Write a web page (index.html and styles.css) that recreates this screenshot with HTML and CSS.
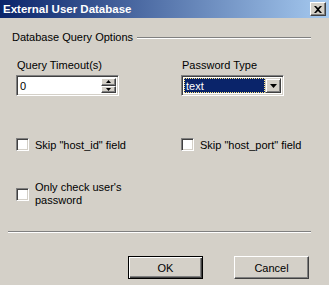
FILE: index.html
```html
<!DOCTYPE html>
<html>
<head>
<meta charset="utf-8">
<link rel="stylesheet" href="styles.css">
</head>
<body>
<div class="dialog">
  <div class="titlebar">
    <span class="title">External User Database</span>
    <span class="close"><svg width="8" height="7" viewBox="0 0 8 7"><path d="M0 0h2l2 2 2-2h2L5 3.5 8 7H6L4 5 2 7H0l3-3.5z" fill="#000"/></svg></span>
  </div>
  <div class="body">
    <div class="group-head">
      <span>Database Query Options</span>
      <span class="etch"></span>
    </div>
    <div class="fields">
      <div class="field">
        <div class="label">Query Timeout(s)</div>
        <div class="sunken input">
          <span class="val">0</span>
          <span class="spin">
            <span class="spinbtn"><svg width="5" height="3" viewBox="0 0 5 3"><path d="M2.5 0L5 3H0z" fill="#000"/></svg></span>
            <span class="spinbtn"><svg width="5" height="3" viewBox="0 0 5 3"><path d="M0 0h5L2.5 3z" fill="#000"/></svg></span>
          </span>
        </div>
      </div>
      <div class="field">
        <div class="label">Password Type</div>
        <div class="sunken select">
          <span class="sel"><span class="seltext">text</span></span>
          <span class="dropbtn"><svg width="7" height="4" viewBox="0 0 7 4"><path d="M0 0h7L3.5 4z" fill="#000"/></svg></span>
        </div>
      </div>
    </div>
    <div class="checks">
      <label class="check"><span class="box"></span><span>Skip "host_id" field</span></label>
      <label class="check"><span class="box"></span><span>Skip "host_port" field</span></label>
    </div>
    <label class="check only"><span class="box"></span><span>Only check user's<br>password</span></label>
    <div class="sep"></div>
    <div class="buttons">
      <button class="btn default">OK</button>
      <button class="btn">Cancel</button>
    </div>
  </div>
</div>
</body>
</html>
```

FILE: styles.css
```css
html, body {
  margin: 0;
  padding: 0;
}
body {
  width: 329px;
  height: 285px;
  background: #d4d0c8;
  font-family: "Liberation Sans", Arial, sans-serif;
  font-size: 11px;
  color: #000;
  overflow: hidden;
}
.dialog {
  display: flex;
  flex-direction: column;
  height: 285px;
}
.titlebar {
  height: 18px;
  display: flex;
  align-items: center;
  justify-content: space-between;
  padding: 0 3px 0 3px;
  background: linear-gradient(to right, #0a246a, #a6caf0);
}
.title {
  color: #fff;
  font-weight: bold;
  font-family: "Liberation Sans", Arial, sans-serif;
  font-size: 11.5px;
}
.close {
  width: 16px;
  height: 14px;
  box-sizing: border-box;
  background: #d4d0c8;
  border-top: 1px solid #fff;
  border-left: 1px solid #fff;
  border-right: 1px solid #404040;
  border-bottom: 1px solid #404040;
  box-shadow: inset -1px -1px 0 #808080;
  display: flex;
  align-items: center;
  justify-content: center;
  padding-right: 1px;
}
.body {
  padding: 12px 0 0 0;
  display: flex;
  flex-direction: column;
}
.group-head {
  display: flex;
  align-items: center;
  margin-left: 12px;
  margin-right: 18px;
  height: 14px;
}
.etch {
  flex: 1;
  margin-left: 4px;
  margin-top: 1px;
  border-top: 1px solid #808080;
  border-bottom: 1px solid #fff;
}
.fields {
  display: grid;
  grid-template-columns: 165px 1fr;
  margin-top: 15px;
  margin-left: 16px;
}
.label {
  margin-left: 1px;
  height: 16px;
  line-height: 13px;
}
.sunken {
  box-sizing: border-box;
  height: 21px;
  border-top: 1px solid #808080;
  border-left: 1px solid #808080;
  border-right: 1px solid #fff;
  border-bottom: 1px solid #fff;
  box-shadow: inset 1px 1px 0 #404040, inset -1px -1px 0 #d4d0c8;
  background: #fff;
  display: flex;
  align-items: stretch;
  padding: 2px;
}
.input {
  width: 103px;
}
.val {
  flex: 1;
  padding-left: 1px;
  line-height: 16px;
}
.spin {
  width: 15px;
  display: flex;
  flex-direction: column;
}
.spinbtn {
  flex: 1;
  box-sizing: border-box;
  background: #d4d0c8;
  border-top: 1px solid #fff;
  border-left: 1px solid #fff;
  border-right: 1px solid #404040;
  border-bottom: 1px solid #404040;
  box-shadow: inset -1px -1px 0 #808080;
  display: flex;
  align-items: center;
  justify-content: center;
}
.select {
  width: 103px;
}
.sel {
  flex: 1;
  box-sizing: border-box;
  border: 1px dotted #ffe680;
  background: #0a246a;
  color: #fff;
  display: flex;
  align-items: center;
  padding-left: 1px;
}
.dropbtn {
  width: 16px;
  box-sizing: border-box;
  background: #d4d0c8;
  border-top: 1px solid #d4d0c8;
  border-left: 1px solid #d4d0c8;
  border-right: 1px solid #404040;
  border-bottom: 1px solid #404040;
  box-shadow: inset 1px 1px 0 #fff, inset -1px -1px 0 #808080;
  display: flex;
  align-items: center;
  justify-content: center;
}
.checks {
  display: grid;
  grid-template-columns: 165px 1fr;
  margin-left: 16px;
  margin-top: 42px;
}
.check {
  display: flex;
  align-items: center;
  gap: 6px;
}
.box {
  width: 13px;
  height: 13px;
  box-sizing: border-box;
  background: #fff;
  border-top: 1px solid #808080;
  border-left: 1px solid #808080;
  border-right: 1px solid #fff;
  border-bottom: 1px solid #fff;
  box-shadow: inset 1px 1px 0 #404040, inset -1px -1px 0 #d4d0c8;
  flex: none;
}
.only {
  margin-left: 16px;
  margin-top: 30px;
  line-height: 13px;
}
.sep {
  margin: 24px 18px 0 8px;
  border-top: 1px solid #808080;
  border-bottom: 1px solid #fff;
}
.buttons {
  display: flex;
  justify-content: flex-end;
  gap: 31px;
  margin-top: 23px;
  margin-right: 20px;
}
.btn {
  width: 75px;
  height: 23px;
  box-sizing: border-box;
  margin: 0;
  padding: 0;
  font-family: "Liberation Sans", Arial, sans-serif;
  font-size: 11px;
  color: #000;
  background: #d4d0c8;
  border-top: 1px solid #fff;
  border-left: 1px solid #fff;
  border-right: 1px solid #404040;
  border-bottom: 1px solid #404040;
  box-shadow: inset -1px -1px 0 #808080;
}
.btn.default {
  border: 1px solid #000;
  box-shadow: inset 1px 1px 0 #fff, inset -1px -1px 0 #404040, inset -2px -2px 0 #808080;
}
```
